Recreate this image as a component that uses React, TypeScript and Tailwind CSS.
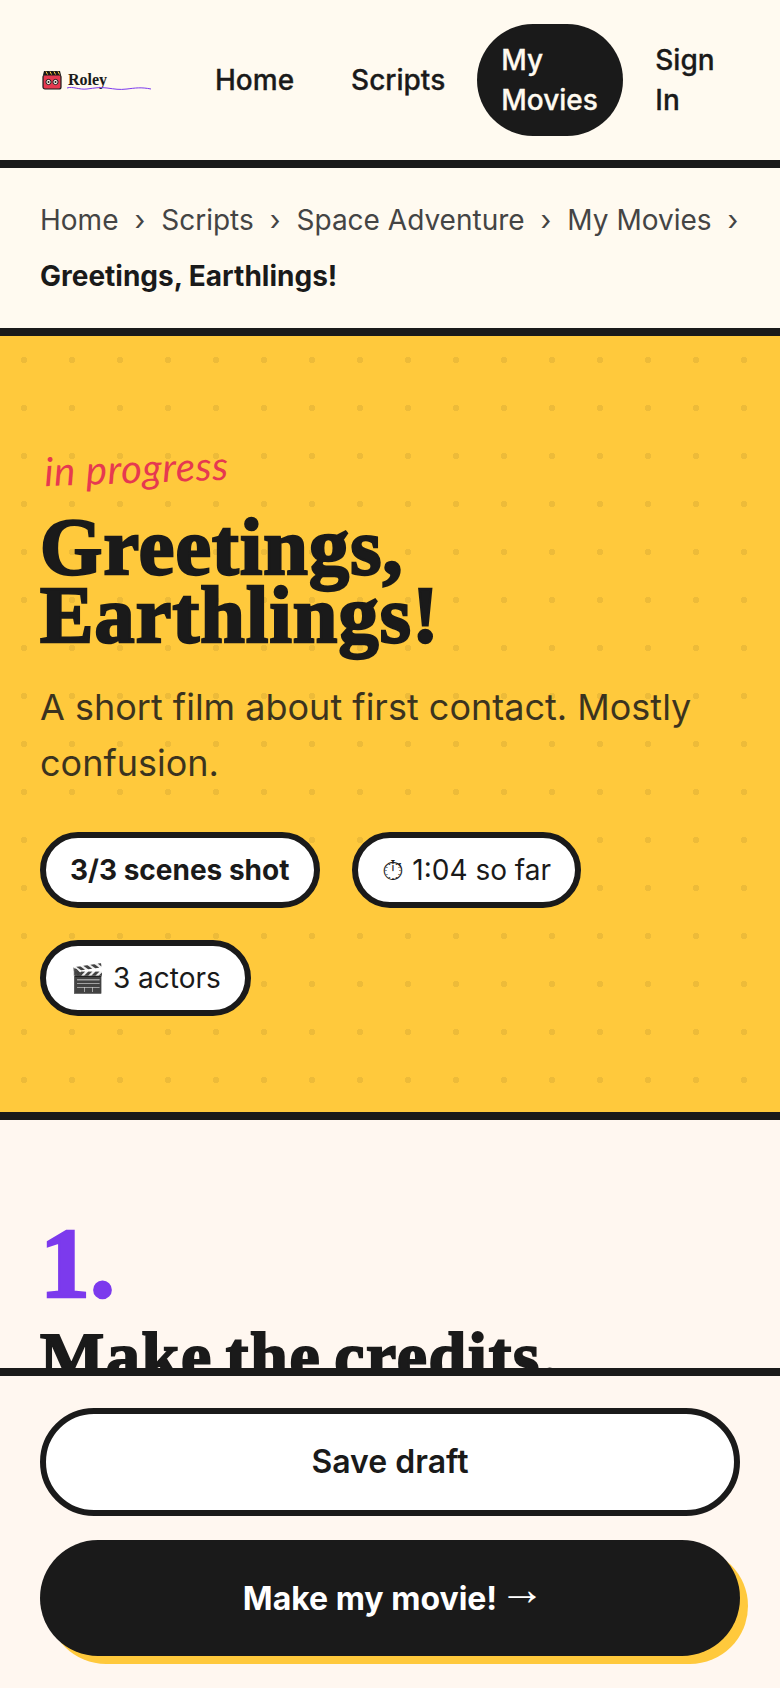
export default function App() {
  const inter = "font-['Inter',sans-serif]";
  const serif = "font-['Liberation_Serif',serif]";
  return (
    <div className={`${inter} min-h-[1688px] h-[1688px] overflow-hidden bg-[#fff7f0] text-[#1a1a1a]`}>
      <header className="flex h-[168px] items-center border-b-8 border-[#1a1a1a] bg-[#fffaf0] pl-10 pr-6">
        <div className="relative flex w-[120px] shrink-0 items-center gap-[6px]">
          <svg width="20" height="20" viewBox="0 0 20 20" className="ml-[2px] shrink-0">
            <rect x="1" y="5" width="18" height="14" rx="2" fill="#e63950" stroke="#1a1a1a" strokeWidth="1.2" />
            <path d="M2 1h16l1 4H1z" fill="#1a1a1a" />
            <path d="M4 1.5l1.5 3M8 1.5l1.5 3M12 1.5l1.5 3M16 1.5l1.5 3" stroke="#ffc93c" strokeWidth="1" />
            <circle cx="6.5" cy="12" r="2.6" fill="#fffaf0" stroke="#1a1a1a" strokeWidth="1" />
            <circle cx="13.5" cy="12" r="2.6" fill="#fffaf0" stroke="#1a1a1a" strokeWidth="1" />
            <circle cx="6.5" cy="12" r="1" fill="#1a1a1a" />
            <circle cx="13.5" cy="12" r="1" fill="#1a1a1a" />
          </svg>
          <span className={`${serif} text-base font-bold leading-none`}>Roley</span>
          <svg width="84" height="4" viewBox="0 0 84 4" className="absolute left-[27px] top-[16px]">
            <path d="M0 2c6-2 12 2 20 1s12-2 20-1 12 2 20 1 14-2 24 0" fill="none" stroke="#7c3aed" strokeWidth="1" />
          </svg>
        </div>
        <nav className="ml-[22px] flex items-center text-[28px] font-medium leading-10 [-webkit-text-stroke:0.3px]">
          <a className="px-[33px]">Home</a>
          <a className="px-6">Scripts</a>
          <a className="ml-2 w-[146px] rounded-[56px] bg-[#1a1a1a] px-6 py-4 text-[#fffaf0]">My Movies</a>
          <a className="w-[108px] px-8">Sign In</a>
        </nav>
      </header>

      <div className="flex flex-wrap items-center border-b-8 border-[#1a1a1a] bg-[#fffaf0] px-10 py-6 text-[28px] leading-[56px]">
        <span className="text-[#444]">Home</span>
        <span className="mx-4 text-[#444]">›</span>
        <span className="text-[#444]">Scripts</span>
        <span className="mx-4 text-[#444]">›</span>
        <span className="text-[#444]">Space Adventure</span>
        <span className="mx-4 text-[#444]">›</span>
        <span className="text-[#444]">My Movies</span>
        <span className="ml-4 text-[#444]">›</span>
        <span className="w-full font-bold">Greetings, Earthlings!</span>
      </div>

      <section className="h-[784px] border-b-8 border-[#1a1a1a] bg-[#ffc93c] bg-[radial-gradient(circle,rgba(26,26,26,0.08)_3px,transparent_3.5px)] bg-[length:48px_48px] px-10 pt-[99px]">
        <p className="ml-1 h-[48px] -rotate-2 font-['Lato',sans-serif] text-[40px] italic leading-[48px] tracking-[0.6px] text-[#e63950]">in progress</p>
        <h1 className={`${serif} mt-[30px] text-[80px] font-bold leading-[68px] tracking-[1.2px] [-webkit-text-stroke:2.5px_#1a1a1a]`}>Greetings,<br />Earthlings!</h1>
        <p className="mt-[30px] text-[36px] leading-[56px] opacity-85">A short film about first contact. Mostly confusion.</p>
        <div className="mt-[41px] flex flex-wrap gap-8 text-[28px] leading-10">
          <span className="rounded-full border-[6px] border-[#1a1a1a] bg-white py-3 pl-6 pr-[25px] font-bold">3/3 scenes shot</span>
          <span className="rounded-full border-[6px] border-[#1a1a1a] bg-white px-6 py-3">⏱ 1:04 so far</span>
          <span className="rounded-full border-[6px] border-[#1a1a1a] bg-white px-6 py-3">🎬 3 actors</span>
        </div>
      </section>

      <section className="px-10 pt-[88px]">
        <div className={`${serif} text-[100px] font-bold leading-[112px] text-[#7c3aed] [-webkit-text-stroke:2.5px_#7c3aed]`}>1.</div>
        <h2 className={`${serif} text-[68px] font-bold leading-[72px] tracking-[1.7px] [word-spacing:-6px] [-webkit-text-stroke:2px_#1a1a1a]`}>Make the credits.</h2>
      </section>

      <div className="fixed inset-x-0 bottom-0 flex h-[320px] flex-col gap-6 border-t-8 border-[#1a1a1a] bg-[#fff7f0] px-10 pt-8">
        <button className="h-[108px] rounded-full border-[6px] border-[#1a1a1a] bg-white text-[32px] font-semibold">Save draft</button>
        <button className="h-[116px] rounded-full bg-[#1a1a1a] pb-2 pl-2 text-[32px] font-bold text-white shadow-[8px_8px_0_#ffc93c]">Make my movie!<span className="ml-[2px] align-[5px] font-['Liberation_Sans',sans-serif] text-[46px] font-normal leading-none">→</span></button>
      </div>
    </div>
  );
}
